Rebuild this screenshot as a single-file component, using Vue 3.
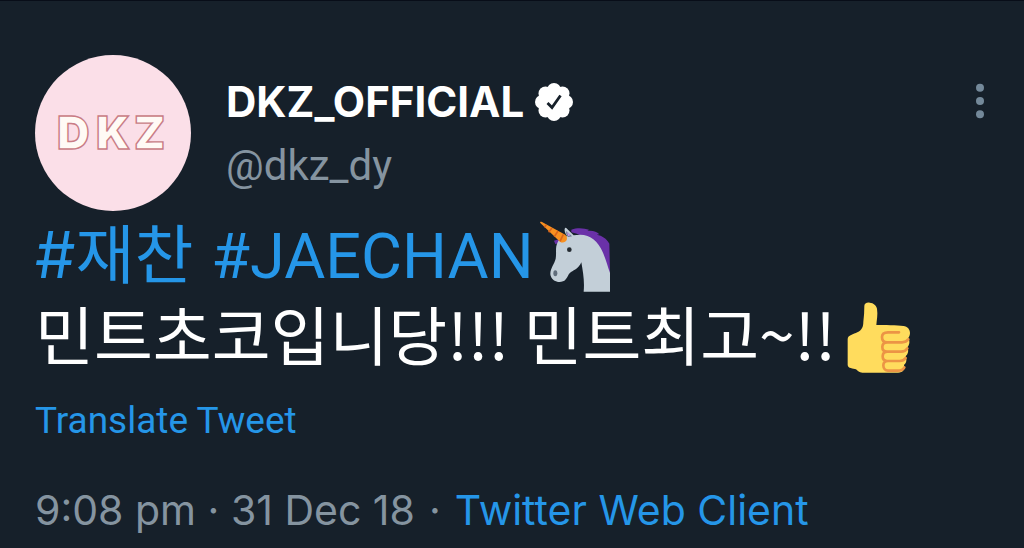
<script setup>
const tweet = {
  name: 'DKZ_OFFICIAL',
  handle: '@dkz_dy',
  time: '9:08 pm',
  date: '31 Dec 18',
  source: 'Twitter Web Client'
}
</script>

<template>
  <article class="tweet">
    <header class="head">
      <a class="avatar" href="#profile" aria-label="DKZ profile">
        <svg viewBox="0 0 156 156" aria-hidden="true">
          <text x="22 61 99" y="94" class="mark">DKZ</text>
        </svg>
      </a>
      <div class="who">
        <div class="name-row">
          <span class="name">{{ tweet.name }}</span>
          <svg class="badge" viewBox="0 0 38 38" role="img" aria-label="Verified">
            <g fill="#fff">
              <circle cx="19" cy="19" r="14" />
              <circle cx="19" cy="7" r="7" />
              <circle cx="27.5" cy="10.5" r="7" />
              <circle cx="31" cy="19" r="7" />
              <circle cx="27.5" cy="27.5" r="7" />
              <circle cx="19" cy="31" r="7" />
              <circle cx="10.5" cy="27.5" r="7" />
              <circle cx="7" cy="19" r="7" />
              <circle cx="10.5" cy="10.5" r="7" />
            </g>
            <path d="M12.500 20l4.500 4.500 8.500-12" fill="none" stroke="#16202a" stroke-width="2.800" />
          </svg>
        </div>
        <span class="handle">{{ tweet.handle }}</span>
      </div>
      <button class="more" type="button" aria-label="More options">
        <svg viewBox="0 0 10 36" aria-hidden="true">
          <circle cx="5" cy="4.700" r="4" />
          <circle cx="5" cy="18" r="4" />
          <circle cx="5" cy="31.300" r="4" />
        </svg>
      </button>
    </header>

    <div class="body">
      <p class="line">
        <span><a class="tag-kr" href="#jaechan-kr">#재찬&nbsp;</a><a class="tag-en" href="#jaechan">#JAECHAN</a></span>
        <svg class="emoji" viewBox="30 28 216 216" role="img" aria-label="Unicorn">
          <path d="M130 57c22-8 40-3 53 0-2 2-4 3-5 4 17-2 28 2 36 10l-8 1c17 3 29 11 38 27l2 88-14-22c-18-46-52-92-102-100zM78 90l14-4 3 12-13 2z" fill="#6a31a8" />
          <path d="M110 55c1-5 4-5 7-1l20 20c43-9 71 12 87 50 10 23 15 44 22 62v57h-79c3-33-2-58-7-88-7 17-20 23-31 29-10 6-11 24-24 28-15 5-32-1-37-17-5-17 11-34 15-51 3-19-2-34 6-49 3-7 8-10 15-12l13-7c-6-9-8-15-7-21z" fill="#c3cfd8" />
          <path d="M115 61l17 16-12 2c-5-6-6-12-5-18z" fill="#66758a" />
          <path d="M117 63l3 14 8-3z" fill="#bd9bea" />
          <path d="M37 37c-2-3 1-5 5-3l67 37c8 5 9 12 7 17-3 7-13 10-20 5z" fill="#f79020" />
          <path d="M55 42l-6 8M72 52l-10 13M90 61l-11 17M106 71l-10 21" stroke="#d9651c" stroke-width="5" />
          <circle cx="124" cy="117" r="7" fill="#242b31" />
          <ellipse cx="82" cy="188" rx="6" ry="9" fill="#606d7b" />
        </svg>
      </p>
      <p class="line">
        <span>민트초코입니당!!! 민트최고~!!</span>
        <svg class="emoji thumb" viewBox="30 22 216 216" role="img" aria-label="Thumbs up">
          <path d="M88 34c0-7 6-11 16-10 12 1 20 8 22 18 3 18-1 34-2 49 22 0 64 0 81 3 13 1 20 11 20 21 0 7-3 12-5 15 6 11 3 21-3 28 5 11 2 20-5 27 4 10 3 20-5 26 3 13-3 23-18 23H82c-10 0-13-5-19-10-8-4-25-2-25-14v-76c0-13 18-15 29-21 14-7 18-17 18-32 2-15 3-31 3-47z" fill="#ffdc5d" />
          <path d="M192 113h-33c-13 0-18 7-18 14 0 10 6 16 15 16h45c9 0 15-3 19-9M201 143h-44c-11 0-15 7-15 14 0 8 5 14 14 14h42c9 0 15-3 19-10M198 171h-40c-11 0-15 6-15 14 0 9 5 14 13 14h38c9 0 14-3 18-9M194 199h-35c-10 0-14 5-14 13 0 9 6 16 14 16h29c10 0 17-4 20-10" fill="none" stroke="#ec9445" stroke-width="8" stroke-linecap="round" />
        </svg>
      </p>
    </div>

    <a class="translate" href="#translate">Translate Tweet</a>

    <footer class="meta">
      <time datetime="2018-12-31T21:08">{{ tweet.time }} · {{ tweet.date }}</time>
      <span>·</span>
      <a href="#source">{{ tweet.source }}</a>
    </footer>
  </article>
</template>

<style>
body {
  margin: 0;
  background: #16202a;
}
</style>

<style scoped>
.tweet {
  padding: 54px 35px 0;
  border-top: 1px solid #080d18;
  font-family: Inter, "Noto Sans CJK KR", sans-serif;
  color: #8594a0;
}
a {
  color: #2596e8;
  text-decoration: none;
}
.head {
  display: flex;
  align-items: flex-start;
}
.avatar {
  flex: none;
  width: 156px;
  height: 156px;
  border-radius: 50%;
  background: #fbdfe8;
}
.avatar svg {
  display: block;
}
.mark {
  font: 900 45px Inter, sans-serif;
  fill: #fffaf5;
  stroke: #c97c85;
  stroke-width: 1.4px;
}
.who {
  flex: 1;
  margin-left: 35px;
  padding-top: 21px;
}
.name-row {
  display: flex;
  align-items: center;
  gap: 11px;
  line-height: 52px;
}
.name {
  color: #fff;
  font-size: 42px;
  font-weight: 700;
}
.badge {
  width: 38px;
  height: 38px;
}
.handle {
  display: block;
  font-family: Roboto, sans-serif;
  font-size: 42px;
  line-height: 76px;
}
.more {
  margin: 28px 4px 0 0;
  padding: 0;
  border: 0;
  background: none;
}
.more svg {
  display: block;
  width: 10px;
  height: 36px;
  fill: #74899a;
}
.line {
  display: flex;
  align-items: flex-start;
  min-height: 82px;
  margin: 0;
  color: #fff;
  font-family: "Noto Sans CJK KR", sans-serif;
  font-size: 64px;
  line-height: 78px;
  white-space: nowrap;
}
.tag-kr,
.tag-en {
  line-height: 64px;
}
.tag-kr {
  font-family: Inter, "Noto Sans CJK KR", sans-serif;
}
.tag-en {
  font-family: Roboto, sans-serif;
  font-size: 63px;
}
.emoji {
  flex: none;
  width: 72px;
  height: 72px;
  margin: 9px 0 0 4px;
}
.thumb {
  margin-left: 9px;
}
.translate {
  display: inline-block;
  margin-top: 21px;
  font-family: Roboto, sans-serif;
  font-size: 37px;
  line-height: 50px;
}
.meta {
  display: flex;
  gap: 14px;
  margin-top: 38px;
  font-size: 41px;
  line-height: 52px;
  white-space: nowrap;
}
</style>
